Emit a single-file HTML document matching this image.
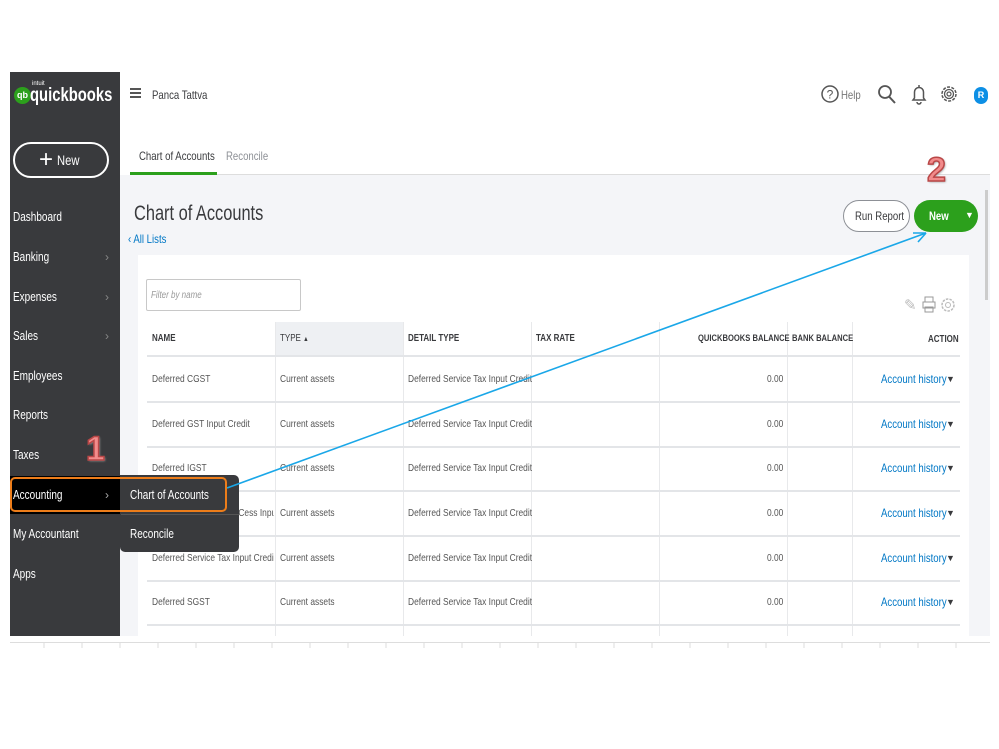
<!DOCTYPE html>
<html><head><meta charset="utf-8"><style>
*{margin:0;padding:0;box-sizing:border-box}
body{width:999px;height:749px;background:#fff;position:relative;overflow:hidden;font-family:"Liberation Sans",sans-serif;color:#393a3d}
.a{position:absolute;white-space:nowrap}
.t{transform:scaleX(.8);transform-origin:0 0}
.side{left:10px;top:72px;width:110px;height:564px;background:#393a3d}
.nav{color:#fff;font-size:12.5px;left:13px}
.chev{color:#888;font-size:12px;left:105px}
.th{font-size:10px;font-weight:bold;color:#393a3d;top:333px}
.td{font-size:10.5px;color:#555;overflow:hidden}
.lnk{font-size:12px;color:#0077c5}
.dd{font-size:9px;color:#393a3d;left:946px}
.hl{position:absolute;left:147px;width:813px;height:2px;background:#e3e5e8}
.vl{position:absolute;top:322px;width:1px;height:314px;background:#e8e9eb}
.big{font-family:"Liberation Sans",sans-serif;font-weight:bold;color:#f28b8b;font-size:34px;-webkit-text-stroke:1.5px #b94747;text-shadow:1px 1px 2px #999}
</style></head><body>
<div class="a side"></div>
<div class="a" style="left:14px;top:87px;width:17px;height:17px;border-radius:50%;background:#2ca01c;color:#fff;font-size:9px;font-weight:bold;text-align:center;line-height:17px">qb</div>
<div class="a" style="left:32px;top:81px;color:#fff;font-size:6px">intuit</div>
<div class="a t" style="left:30px;top:85px;color:#fff;font-size:19px;font-weight:bold;transform:scaleX(.78)">quickbooks</div>
<div class="a" style="left:13px;top:142px;width:96px;height:36px;border:2.5px solid #fff;border-radius:18px"></div>
<div class="a" style="left:39px;top:146px;color:#fff;font-size:24px;font-weight:300">+</div>
<div class="a t" style="left:57px;top:152px;color:#fff;font-size:14px">New</div>
<div class="a nav t" style="top:210px">Dashboard</div>
<div class="a nav t" style="top:250px">Banking</div><div class="a chev" style="top:250px">›</div>
<div class="a nav t" style="top:290px">Expenses</div><div class="a chev" style="top:290px">›</div>
<div class="a nav t" style="top:329px">Sales</div><div class="a chev" style="top:329px">›</div>
<div class="a nav t" style="top:369px">Employees</div>
<div class="a nav t" style="top:408px">Reports</div>
<div class="a nav t" style="top:448px">Taxes</div>
<div class="a" style="left:10px;top:476px;width:110px;height:38px;background:#000"></div>
<div class="a nav t" style="top:488px">Accounting</div><div class="a chev" style="top:488px;color:#aaa">›</div>
<div class="a nav t" style="top:527px">My Accountant</div>
<div class="a nav t" style="top:567px">Apps</div>
<div class="a" style="left:130px;top:88px;width:11px;height:2px;background:#555;box-shadow:0 4px 0 #555,0 8px 0 #555"></div>
<div class="a t" style="left:152px;top:88px;font-size:12px">Panca Tattva</div>
<svg class="a" style="left:821px;top:83px" width="18" height="22" viewBox="0 0 18 22"><circle cx="9" cy="11" r="8" fill="none" stroke="#555" stroke-width="1.5"/><text x="9" y="15.5" font-size="12" text-anchor="middle" fill="#555" font-family="Liberation Sans">?</text></svg>
<div class="a t" style="left:841px;top:88px;font-size:12px;color:#777">Help</div>
<svg class="a" style="left:877px;top:83px" width="20" height="22"><circle cx="8" cy="9" r="6" fill="none" stroke="#555" stroke-width="1.8"/><line x1="12" y1="13.5" x2="18" y2="20" stroke="#555" stroke-width="2"/></svg>
<svg class="a" style="left:910px;top:83px" width="18" height="24"><path d="M3 17 L4.5 15 V9 A4.5 4.5 0 0 1 13.5 9 V15 L15 17 Z" fill="none" stroke="#555" stroke-width="1.5"/><path d="M7 19 A2 2 0 0 0 11 19" fill="none" stroke="#555" stroke-width="1.5"/><line x1="9" y1="2" x2="9" y2="4.5" stroke="#555" stroke-width="1.5"/></svg>
<svg class="a" style="left:939px;top:83px" width="20" height="22"><circle cx="10" cy="11" r="7" fill="none" stroke="#555" stroke-width="1.5" stroke-dasharray="3 1.4"/><circle cx="10" cy="11" r="4.5" fill="none" stroke="#555" stroke-width="1.3"/><circle cx="10" cy="11" r="2" fill="none" stroke="#555" stroke-width="1.2"/></svg>
<div class="a" style="left:974px;top:87px;width:14px;height:17px;border-radius:7px;background:#0d8fe5;color:#fff;font-size:9px;font-weight:bold;text-align:center;line-height:17px">R</div>
<div class="a t" style="left:139px;top:149px;font-size:12px">Chart of Accounts</div>
<div class="a t" style="left:226px;top:149px;font-size:12px;color:#8d9096">Reconcile</div>
<div class="a" style="left:120px;top:175px;width:870px;height:461px;background:#f4f5f8"></div>
<div class="a" style="left:130px;top:172px;width:87px;height:3px;background:#2ca01c"></div>
<div class="a" style="left:217px;top:174px;width:773px;height:1px;background:#ddd"></div>
<div class="a" style="left:985px;top:190px;width:3px;height:110px;background:#ccc"></div>
<div class="a t" style="left:134px;top:202px;font-size:21px;transform:scaleX(.78)">Chart of Accounts</div>
<div class="a t" style="left:128px;top:232px;font-size:12px;color:#0077c5">‹ All Lists</div>
<div class="a" style="left:843px;top:200px;width:67px;height:32px;border:1.5px solid #8d9096;border-radius:16px;background:#fff"></div>
<div class="a t" style="left:855px;top:209px;font-size:12px">Run Report</div>
<div class="a" style="left:914px;top:200px;width:64px;height:32px;border-radius:16px;background:#2ca01c"></div>
<div class="a t" style="left:929px;top:209px;font-size:12px;font-weight:bold;color:#fff">New</div>
<div class="a" style="left:965px;top:210px;font-size:9px;color:#fff">▼</div>
<div class="a" style="left:138px;top:255px;width:831px;height:381px;background:#fff"></div>
<div class="a" style="left:146px;top:279px;width:155px;height:32px;border:1px solid #c8c8c8;border-radius:2px"></div>
<div class="a t" style="left:151px;top:290px;font-size:10px;font-style:italic;color:#999">Filter by name</div>
<div class="a" style="left:904px;top:296px;font-size:15px;color:#bbb">✎</div>
<svg class="a" style="left:922px;top:296px" width="14" height="18"><rect x="3" y="1" width="8" height="5" fill="none" stroke="#999"/><rect x="1" y="6" width="12" height="6" fill="none" stroke="#999"/><rect x="3" y="11" width="8" height="5" fill="none" stroke="#999"/></svg>
<svg class="a" style="left:940px;top:296px" width="16" height="18"><circle cx="8" cy="9" r="6" fill="none" stroke="#bbb" stroke-width="1.5" stroke-dasharray="2.5 1.2"/><circle cx="8" cy="9" r="2.5" fill="none" stroke="#bbb"/></svg>
<div class="a" style="left:275px;top:322px;width:128px;height:34px;background:#eef0f3"></div>
<div class="vl" style="left:275px"></div><div class="vl" style="left:403px"></div><div class="vl" style="left:531px"></div><div class="vl" style="left:659px"></div><div class="vl" style="left:787px"></div><div class="vl" style="left:852px"></div>
<div class="a th t" style="left:152px">NAME</div>
<div class="a th t" style="left:280px;font-weight:normal">TYPE <span style="font-size:7px">▲</span></div>
<div class="a th t" style="left:408px">DETAIL TYPE</div>
<div class="a th t" style="left:536px">TAX RATE</div>
<div class="a th t" style="left:698px;font-size:9.5px">QUICKBOOKS BALANCE</div>
<div class="a th t" style="left:792px;font-size:9.5px">BANK BALANCE</div>
<div class="a th t" style="left:928px;top:334px">ACTION</div>
<div class="hl" style="top:355px"></div>
<div class="hl" style="top:401px"></div><div class="hl" style="top:446px"></div><div class="hl" style="top:490px"></div><div class="hl" style="top:535px"></div><div class="hl" style="top:580px"></div><div class="hl" style="top:624px"></div>

<div class="a td t" style="left:152px;top:373px;width:152px">Deferred CGST</div>
<div class="a td t" style="left:152px;top:418px;width:152px">Deferred GST Input Credit</div>
<div class="a td t" style="left:152px;top:462px;width:152px">Deferred IGST</div>
<div class="a td t" style="left:152px;top:507px;width:152px">Deferred Krishi Kalyan Cess Input C</div>
<div class="a td t" style="left:152px;top:552px;width:152px">Deferred Service Tax Input Credit</div>
<div class="a td t" style="left:152px;top:596px;width:152px">Deferred SGST</div>

<div class="a td t" style="left:280px;top:373px">Current assets</div>
<div class="a td t" style="left:280px;top:418px">Current assets</div>
<div class="a td t" style="left:280px;top:462px">Current assets</div>
<div class="a td t" style="left:280px;top:507px">Current assets</div>
<div class="a td t" style="left:280px;top:552px">Current assets</div>
<div class="a td t" style="left:280px;top:596px">Current assets</div>

<div class="a td t" style="left:408px;top:373px">Deferred Service Tax Input Credit</div>
<div class="a td t" style="left:408px;top:418px">Deferred Service Tax Input Credit</div>
<div class="a td t" style="left:408px;top:462px">Deferred Service Tax Input Credit</div>
<div class="a td t" style="left:408px;top:507px">Deferred Service Tax Input Credit</div>
<div class="a td t" style="left:408px;top:552px">Deferred Service Tax Input Credit</div>
<div class="a td t" style="left:408px;top:596px">Deferred Service Tax Input Credit</div>

<div class="a td t" style="left:767px;top:373px">0.00</div><div class="a td t" style="left:767px;top:418px">0.00</div><div class="a td t" style="left:767px;top:462px">0.00</div><div class="a td t" style="left:767px;top:507px">0.00</div><div class="a td t" style="left:767px;top:552px">0.00</div><div class="a td t" style="left:767px;top:596px">0.00</div>

<div class="a lnk t" style="left:881px;top:372px">Account history</div><div class="a dd" style="top:374px">▼</div>
<div class="a lnk t" style="left:881px;top:417px">Account history</div><div class="a dd" style="top:419px">▼</div>
<div class="a lnk t" style="left:881px;top:461px">Account history</div><div class="a dd" style="top:463px">▼</div>
<div class="a lnk t" style="left:881px;top:506px">Account history</div><div class="a dd" style="top:508px">▼</div>
<div class="a lnk t" style="left:881px;top:551px">Account history</div><div class="a dd" style="top:553px">▼</div>
<div class="a lnk t" style="left:881px;top:595px">Account history</div><div class="a dd" style="top:597px">▼</div>

<div class="a" style="left:120px;top:475px;width:119px;height:77px;background:#393a3d;border-radius:0 5px 5px 5px"></div>
<div class="a" style="left:121px;top:514px;width:118px;height:1px;background:#555"></div>
<div class="a t" style="left:130px;top:488px;font-size:12.5px;color:#fff">Chart of Accounts</div>
<div class="a t" style="left:130px;top:527px;font-size:12.5px;color:#fff">Reconcile</div>
<div class="a" style="left:10px;top:477px;width:217px;height:35px;border:2px solid #ed7d1a;border-radius:5px"></div>
<svg class="a" style="left:0;top:0" width="999" height="749"><line x1="227" y1="488" x2="926" y2="233" stroke="#1aa7e8" stroke-width="1.6"/><path d="M926 233 L913 233 M926 233 L918 242" stroke="#1aa7e8" stroke-width="1.6" fill="none"/></svg>
<div class="a big" style="left:86px;top:430px">1</div>
<div class="a big" style="left:927px;top:151px">2</div>
<div class="a" style="left:10px;top:642px;width:980px;height:1px;background:#ddd"></div>
<svg class="a" style="left:0;top:636px" width="999" height="14"><g stroke="#ddd"><line x1="44" y1="6" x2="44" y2="12"/><line x1="82" y1="6" x2="82" y2="12"/><line x1="120" y1="6" x2="120" y2="12"/><line x1="158" y1="6" x2="158" y2="12"/><line x1="196" y1="6" x2="196" y2="12"/><line x1="234" y1="6" x2="234" y2="12"/><line x1="272" y1="6" x2="272" y2="12"/><line x1="310" y1="6" x2="310" y2="12"/><line x1="348" y1="6" x2="348" y2="12"/><line x1="386" y1="6" x2="386" y2="12"/><line x1="424" y1="6" x2="424" y2="12"/><line x1="462" y1="6" x2="462" y2="12"/><line x1="500" y1="6" x2="500" y2="12"/><line x1="538" y1="6" x2="538" y2="12"/><line x1="576" y1="6" x2="576" y2="12"/><line x1="614" y1="6" x2="614" y2="12"/><line x1="652" y1="6" x2="652" y2="12"/><line x1="690" y1="6" x2="690" y2="12"/><line x1="728" y1="6" x2="728" y2="12"/><line x1="766" y1="6" x2="766" y2="12"/><line x1="804" y1="6" x2="804" y2="12"/><line x1="842" y1="6" x2="842" y2="12"/><line x1="880" y1="6" x2="880" y2="12"/><line x1="918" y1="6" x2="918" y2="12"/><line x1="956" y1="6" x2="956" y2="12"/></g></svg>
</body></html>
